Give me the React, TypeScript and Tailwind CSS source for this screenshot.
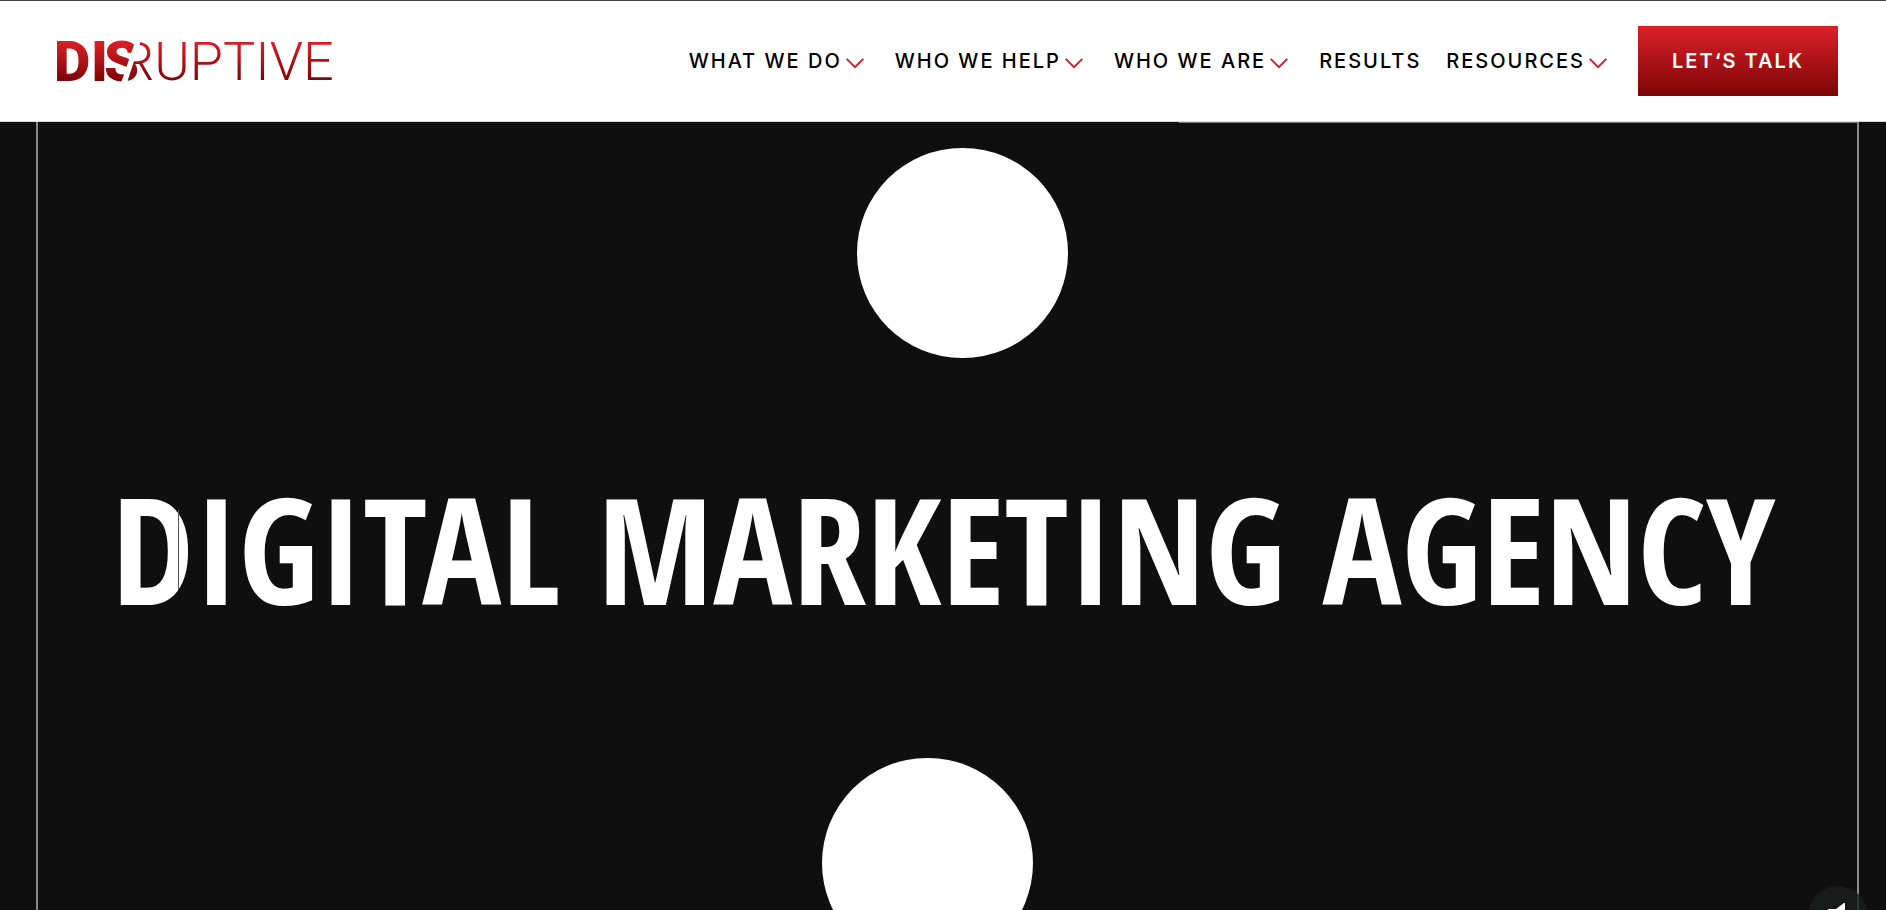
type NavItem = { label: string; href: string; menu?: boolean };

const navItems: NavItem[] = [
  { label: "WHAT WE DO", href: "#services", menu: true },
  { label: "WHO WE HELP", href: "#industries", menu: true },
  { label: "WHO WE ARE", href: "#about", menu: true },
  { label: "RESULTS", href: "#results" },
  { label: "RESOURCES", href: "#resources", menu: true },
];

function Logo() {
  return (
    <svg className="overflow-visible" width="280" height="42" viewBox="0 0 280 42" role="img" aria-label="Disruptive">
      <defs>
        <linearGradient id="logo-red" gradientUnits="userSpaceOnUse" x1="0" y1="1" x2="0" y2="41">
          <stop offset="0" stopColor="#dc2027" />
          <stop offset="1" stopColor="#7d0406" />
        </linearGradient>
      </defs>
      <text x="64" y="40" fill="url(#logo-red)" fontFamily="Roboto, sans-serif" fontWeight="300" fontSize="54">
        RUPTIVE
      </text>
      {/* Hides the stem of the R */}
      <path d="M60 0 H85 L71 42 H60 Z" fill="#fff" />
      <text x="-2 35 48" y="41" fill="url(#logo-red)" fontFamily="Roboto, sans-serif" fontWeight="900" fontSize="56">
        DIS
      </text>
      {/* Diagonal cut between the bold and the thin half */}
      <path d="M80 -1 L65 43 H71 L85 -1 Z" fill="#fff" />
      <path d="M58 25 L73 27 L71 31 L64 31 L60 28 Z" fill="#fff" />
    </svg>
  );
}

function Chevron() {
  return (
    <svg className="ml-1 mr-1.5 mt-1" width="18" height="11" viewBox="0 0 18 11" fill="none" aria-hidden="true">
      <path d="M0.7 0.9 L9 9.2 L17.3 0.9" stroke="#d0222b" strokeWidth="2" />
    </svg>
  );
}

function Header() {
  return (
    <header className="flex shrink-0 items-center justify-between border-b border-t border-b-[#dcdcdc] border-t-[#3f4649] bg-white py-[25px] pl-14 pr-12">
      <a href="#home">
        <Logo />
      </a>
      <nav className="flex items-center gap-[25px]">
        {navItems.map((item) => (
          <a
            key={item.label}
            href={item.href}
            className="flex items-center whitespace-nowrap text-[20px] font-medium tracking-[2px] text-black"
          >
            {item.label}
            {item.menu && <Chevron />}
          </a>
        ))}
        <a
          href="#contact"
          className="flex h-[70px] w-[200px] items-center justify-center whitespace-nowrap bg-gradient-to-b from-[#dc2228] to-[#7d0406] text-[20px] font-semibold tracking-[2px] text-white"
        >
          LET‘S TALK
        </a>
      </nav>
    </header>
  );
}

function Hero() {
  return (
    <main className="relative min-h-0 flex-1 overflow-hidden bg-[#0f0f0f] pl-9 pr-[27px]">
      <span className="absolute right-7 top-0 h-px w-[36%] bg-[#7a7a7a]" />
      <div className="flex h-full flex-col items-center border-x-2 border-[#8a8a8a] pt-[26px]">
        <div className="ml-[30px] h-[210px] w-[211px] shrink-0 rounded-full bg-white" />
        <h1 className="relative mr-2 flex h-[400px] shrink-0 items-center whitespace-nowrap pb-5 font-['Open_Sans_Condensed','Roboto_Condensed',sans-serif] text-[148px] font-bold leading-none text-white">
          DIGITAL MARKETING AGENCY
          {/* Hairline running down the bowl of the D */}
          <span className="absolute left-[66px] top-[152px] h-20 w-px bg-[#555]" />
        </h1>
        <div className="mr-10 h-[210px] w-[211px] shrink-0 rounded-full bg-white" />
      </div>
    </main>
  );
}

export default function App() {
  return (
    <div className="flex h-screen flex-col overflow-hidden font-['Inter',sans-serif]">
      <Header />
      <Hero />
      {/* Sound toggle */}
      <button
        type="button"
        aria-label="Mute video"
        className="fixed -bottom-9 right-[18px] flex size-[60px] items-center justify-center rounded-full bg-[#1c1e1e]/80"
      >
        <svg width="26" height="26" viewBox="0 0 26 26" fill="#fff" aria-hidden="true">
          <path d="M3 6 H11 L19 0 H20 V25 L11 18 H3 Z" />
        </svg>
      </button>
    </div>
  );
}
